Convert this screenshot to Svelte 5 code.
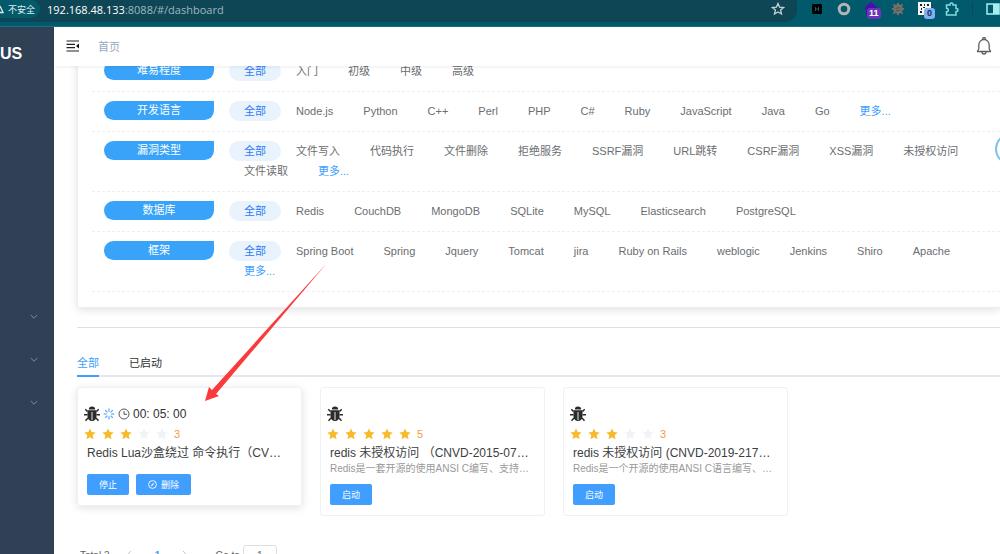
<script lang="ts">
	const filters = [
		{ label: '难易程度', items: ['入门', '初级', '中级', '高级'], more: false },
		{
			label: '开发语言',
			items: ['Node.js', 'Python', 'C++', 'Perl', 'PHP', 'C#', 'Ruby', 'JavaScript', 'Java', 'Go'],
			more: true
		},
		{
			label: '漏洞类型',
			items: [
				'文件写入',
				'代码执行',
				'文件删除',
				'拒绝服务',
				'SSRF漏洞',
				'URL跳转',
				'CSRF漏洞',
				'XSS漏洞',
				'未授权访问',
				'文件读取'
			],
			more: true
		},
		{
			label: '数据库',
			items: ['Redis', 'CouchDB', 'MongoDB', 'SQLite', 'MySQL', 'Elasticsearch', 'PostgreSQL'],
			more: false
		},
		{
			label: '框架',
			items: [
				'Spring Boot',
				'Spring',
				'Jquery',
				'Tomcat',
				'jira',
				'Ruby on Rails',
				'weblogic',
				'Jenkins',
				'Shiro',
				'Apache'
			],
			more: true
		}
	];

	const images = [
		{
			title: 'Redis Lua沙盒绕过 命令执行（CV…',
			desc: '',
			rank: 3,
			running: true,
			time: '00: 05: 00'
		},
		{
			title: 'redis 未授权访问 （CNVD-2015-07…',
			desc: 'Redis是一套开源的使用ANSI C编写、支持…',
			rank: 5,
			running: false,
			time: ''
		},
		{
			title: 'redis 未授权访问 (CNVD-2019-217…',
			desc: 'Redis是一个开源的使用ANSI C语言编写、…',
			rank: 3,
			running: false,
			time: ''
		}
	];

	const tabs = ['全部', '已启动'];
	const stars = [1, 2, 3, 4, 5];
	const rays = [0, 45, 90, 135, 180, 225, 270, 315];

	let activeTab = $state('全部');
	let page = $state('1');
</script>

<div class="window">
	<div class="browser">
		<div class="address">
			<span class="insecure">
				<svg width="8" height="10" viewBox="0 0 8 10"><path d="M-2 8.500H3L0 2" fill="none" stroke="#dceef0" stroke-width="1.300" /></svg>
				不安全
			</span>
			<span class="url"><b>192.168.48.133</b>:8088/#/dashboard</span>
			<svg class="bookmark" width="14" height="14" viewBox="0 0 14 14">
				<path d="M7 1.500l1.600 3.700 4 .3-3 2.600.9 3.900L7 9.900 3.500 12l.9-3.900-3-2.600 4-.3z" fill="none" stroke="#c5d3d6" stroke-width="1.300" />
			</svg>
		</div>
		<div class="extensions">
			<svg width="12" height="10" viewBox="0 0 12 10">
				<rect width="10" height="10" rx="1" fill="#000" />
				<path d="M3.500 3v4M6.500 3v4M3.500 5h3" stroke="#0d6475" />
			</svg>
			<svg width="14" height="14" viewBox="0 0 14 14"><circle cx="7" cy="7" r="4.800" fill="none" stroke="#b4b4b4" stroke-width="3" /></svg>
			<span class="ext">
				<svg width="14" height="14" viewBox="0 0 14 14"><path d="M0 6.500L7 0l7 6.500h-2V13H2V6.500z" fill="#4b0bad" /></svg>
				<span class="badge purple">11</span>
			</span>
			<svg width="14" height="14" viewBox="0 0 14 14">
				{#each rays as angle}
					<path d="M6 3L7 0.800L8 3z" fill="#74716b" stroke="#74716b" transform="rotate({angle} 7 7)" />
				{/each}
				<circle cx="7" cy="7" r="4.500" fill="#74716b" />
				<path d="M4.500 6.500l4-1M5 9l4-1" stroke="#4f5552" />
			</svg>
			<span class="ext">
				<svg width="14" height="14" viewBox="0 0 14 14">
					<rect width="13" height="13" fill="#f5f5f5" />
					<path d="M2 2h2v2H2zM9 2h2v2H9zM2 9h2v2H2zM5 5h2v1H5zM6 2h1v2H6zM3 6h1v2H3zM8 6h3v1H8z" fill="#222" />
				</svg>
				<span class="badge blue">0</span>
			</span>
			<svg width="14" height="14" viewBox="0 0 14 14">
				<path d="M1.500 3H5V2.500a1.500 1.500 0 0 1 3 0V3h3v3.500h.5a1.500 1.500 0 0 1 0 3H11V13H1.500V9.800a1.800 1.800 0 0 0 0-3.600z" fill="none" stroke="#83dbe0" stroke-width="1.500" />
			</svg>
			<i class="divider"></i>
			<svg width="14" height="12" viewBox="0 0 14 12">
				<rect x="1" y="1" width="12" height="10" fill="none" stroke="#a5f0ef" stroke-width="1.500" />
				<path d="M7 1h6v10H7z" fill="#a5f0ef" />
			</svg>
		</div>
	</div>

	<div class="app">
		<nav class="sidebar">
			<div class="logo">US</div>
			<div class="menu">
				{#each [1, 2, 3] as item}
					<button class="menu-item" aria-label="展开菜单 {item}">
						<svg width="8" height="6" viewBox="0 0 8 6"><path d="M0.800 1L4 4.200 7.200 1" fill="none" stroke="#7f8b9b" /></svg>
					</button>
				{/each}
			</div>
		</nav>

		<div class="main">
			<header class="navbar">
				<button aria-label="收起菜单">
					<svg width="14" height="12" viewBox="0 0 14 12">
						<path d="M0.500 1H13M0.500 4.300H9M0.500 7.600H9M0.500 11H13" stroke="#222" stroke-width="1.200" />
						<path d="M13 3.500v5L10 6z" fill="#111" />
					</svg>
				</button>
				<a class="crumb" href="#/dashboard">首页</a>
				<button class="bell" aria-label="通知">
					<svg width="16" height="18" viewBox="0 0 16 18">
						<path d="M1 14.500h14M2.800 12V8a5.200 5.500 0 0 1 10.400 0v4M6.800 2.500V1.600a1.200 1.200 0 0 1 2.400 0v.9M6 15a2 2 0 0 0 4 0M2.800 12L1.200 14.500M13.200 12l1.600 2.500" fill="none" stroke="#5c5e63" stroke-width="1.300" />
					</svg>
				</button>
			</header>

			<main class="content">
				<section class="filters">
					{#each filters as filter}
						<div class="filter">
							<span class="label">{filter.label}</span>
							<div class="options">
								<button class="option active">全部</button>
								{#each filter.items as item}
									<button class="option">{item}</button>
								{/each}
								{#if filter.more}
									<a class="option more" href="#/dashboard">更多...</a>
								{/if}
							</div>
						</div>
					{/each}
				</section>

				<hr />

				<div class="tabs">
					{#each tabs as tab}
						<button class="tab" class:active={tab === activeTab} onclick={() => (activeTab = tab)}>
							{tab}
						</button>
					{/each}
				</div>

				<div class="cards">
					{#each images as image}
						<article class="card" class:running={image.running}>
							<div class="status">
								<svg width="16" height="16" viewBox="0 0 16 16">
									<path d="M4.800 3.500a3.200 3 0 0 1 6.400 0z" fill="#2b2b2b" />
									<path d="M3.500 4.300h9v6.200a4.500 4.500 0 0 1-9 0z" fill="#2b2b2b" />
									<path d="M3.500 5.500L1.300 3.300M12.500 5.500l2.200-2.200M3.500 8.700H0M12.500 8.700H16M4 12l-2.500 2.700M12 12l2.500 2.700" stroke="#2b2b2b" stroke-width="1.500" />
									<path d="M8 6v8" stroke="#fff" stroke-width="0.900" />
								</svg>
								{#if image.running}
									<svg width="12" height="12" viewBox="0 0 12 12">
										{#each rays as angle}
											<path d="M6 0.600v3.200" stroke="#57a9f5" stroke-width="1.200" transform="rotate({angle} 6 6)" />
										{/each}
									</svg>
									<svg width="12" height="12" viewBox="0 0 12 12">
										<circle cx="6" cy="6" r="5" fill="none" stroke="#55585e" />
										<path d="M6 3v3.300h3" fill="none" stroke="#55585e" />
									</svg>
									<span class="time">{image.time}</span>
								{/if}
							</div>
							<div class="rate">
								{#each stars as star}
									<svg width="12" height="12" viewBox="0 0 12 12">
										<path d="M6 .5l1.700 3.600 3.900.5-2.900 2.700.8 3.900L6 9.300l-3.500 1.900.8-3.900L.4 4.600l3.900-.5z" fill={star <= image.rank ? '#f7ba2a' : '#eff2f7'} />
									</svg>
								{/each}
								<span class="score">{image.rank}</span>
							</div>
							<h3>{image.title}</h3>
							{#if image.desc}
								<p>{image.desc}</p>
							{/if}
							<div class="actions">
								{#if image.running}
									<button class="primary">停止</button>
									<button class="primary">
										<svg width="9" height="9" viewBox="0 0 9 9">
											<circle cx="4.500" cy="4.500" r="3.900" fill="none" stroke="#fff" stroke-width="0.900" />
											<path d="M6.300 2.700L5 5.200 2.800 6.400 4 3.900z" fill="#fff" />
										</svg>
										删除
									</button>
								{:else}
									<button class="primary">启动</button>
								{/if}
							</div>
						</article>
					{/each}
				</div>

				<div class="pagination">
					<span class="total">Total 3</span>
					<button class="pager" aria-label="上一页">
						<svg width="6" height="10" viewBox="0 0 6 10"><path d="M5 1L1 5l4 4" fill="none" stroke="#c0c4cc" /></svg>
					</button>
					<button class="pager current">1</button>
					<button class="pager" aria-label="下一页">
						<svg width="6" height="10" viewBox="0 0 6 10"><path d="M1 1l4 4-4 4" fill="none" stroke="#c0c4cc" /></svg>
					</button>
					<label>Go to <input type="text" bind:value={page} /></label>
				</div>
			</main>
		</div>
	</div>

	<svg class="arrow" width="124" height="140" viewBox="0 0 124 140">
		<path d="M122 0L11 131L14 133L0 138L4 124L7 127z" fill="#fb3b3b" />
	</svg>
	<span class="float-ball"></span>
</div>

<style>
	:global(body) {
		margin: 0;
		background: #fff;
	}

	.window {
		position: relative;
		display: flex;
		flex-direction: column;
		height: 100vh;
		overflow: hidden;
		font-family: 'Liberation Sans', 'Noto Sans CJK SC', sans-serif;
		font-size: 11px;
		color: #606266;
	}

	button,
	input {
		font: inherit;
		color: inherit;
		margin: 0;
		padding: 0;
		border: none;
		background: none;
	}

	button {
		cursor: pointer;
	}

	a {
		text-decoration: none;
	}

	svg {
		display: block;
		flex: none;
	}

	.browser {
		display: flex;
		flex: none;
		height: 26px;
		background: #005a6b;
		border-bottom: 1px solid #1c7180;
	}

	.address {
		display: flex;
		flex: 1;
		align-items: center;
		height: 22px;
		padding-bottom: 4px;
		box-sizing: border-box;
		background: #0f4656;
		border-radius: 0 0 12px 0;
	}

	.insecure {
		display: flex;
		align-items: center;
		height: 18px;
		padding-right: 5px;
		border-radius: 0 9px 9px 0;
		background: #045a6a;
		color: #dceef0;
		font-size: 9px;
		white-space: nowrap;
	}

	.url {
		flex: 1;
		margin-left: 7px;
		font-family: 'Open Sans', 'Noto Sans', sans-serif;
		font-size: 11px;
		color: #9db8be;
	}

	.url b {
		font-weight: 400;
		color: #fff;
	}

	.bookmark {
		margin-right: 12px;
	}

	.extensions {
		display: flex;
		align-items: center;
		gap: 13px;
		height: 18px;
		padding-left: 15px;
		width: 203px;
		box-sizing: border-box;
	}

	.ext {
		position: relative;
	}

	.badge {
		position: absolute;
		left: 3px;
		top: 6px;
		height: 11px;
		line-height: 11px;
		padding: 0 2px;
		border-radius: 3px;
		font-size: 9px;
		font-weight: 700;
	}

	.purple {
		background: #6a35b8;
		color: #fff;
	}

	.blue {
		left: 6px;
		padding: 0 3px;
		background: #7fb0f5;
		color: #1c2c4c;
	}

	.divider {
		width: 1px;
		height: 12px;
		background: #0f4656;
	}

	.app {
		display: flex;
		flex: 1;
		min-height: 0;
	}

	.sidebar {
		width: 54px;
		flex: none;
		background: #304156;
	}

	.logo {
		height: 53px;
		line-height: 53px;
		font-size: 16px;
		font-weight: 700;
		color: #fff;
	}

	.menu {
		padding-top: 215px;
	}

	.menu-item {
		display: flex;
		align-items: center;
		justify-content: flex-end;
		width: 100%;
		height: 43px;
		padding-right: 16px;
	}

	.main {
		display: flex;
		flex: 1;
		flex-direction: column;
		min-width: 0;
	}

	.navbar {
		position: relative;
		z-index: 1;
		display: flex;
		flex: none;
		align-items: center;
		height: 39px;
		padding: 0 8px 2px 12px;
		box-sizing: border-box;
		background: #fff;
		box-shadow: 0 1px 3px rgba(0, 21, 41, 0.08);
	}

	.crumb {
		margin-left: 18px;
		color: #97a8be;
	}

	.bell {
		margin-left: auto;
	}

	.content {
		flex: 1;
		min-height: 0;
		padding-left: 23px;
	}

	.filters {
		margin-top: -15px;
		padding: 0 0 15px 14px;
		border: 1px solid #ebeef5;
		border-right: none;
		border-radius: 3px 0 0 3px;
		box-shadow: 0 2px 9px rgba(0, 0, 0, 0.12);
	}

	.filter {
		display: flex;
		padding: 9px 0 10px 12px;
		border-bottom: 1px dashed #ebeef5;
	}

	.label {
		flex: none;
		width: 110px;
		height: 19px;
		margin-right: 15px;
		border-radius: 10px 0 10px 10px;
		background: #38a3f8;
		color: #fff;
		line-height: 19px;
		text-align: center;
	}

	.options {
		display: flex;
		flex: 1;
		flex-wrap: wrap;
	}

	.option {
		height: 20px;
		padding: 0 15px;
		color: #6b6d70;
		line-height: 20px;
		white-space: nowrap;
	}

	.option.active {
		border-radius: 10px;
		background: #e8f3fe;
		color: #2f7bf6;
	}

	.option.more {
		color: #409eff;
	}

	hr {
		height: 1px;
		margin: 19px 0 0;
		border: none;
		background: #dcdfe6;
	}

	.tabs {
		display: flex;
		gap: 30px;
		margin-top: 18px;
		box-shadow: inset 0 -2px #e4e7ed;
	}

	.tab {
		height: 31px;
		padding-top: 3px;
		border-bottom: 2px solid transparent;
		box-sizing: border-box;
		color: #303133;
	}

	.tab.active {
		border-color: #409eff;
		color: #409eff;
	}

	.cards {
		display: flex;
		align-items: flex-start;
		gap: 18px;
		height: 157px;
		margin-top: 10px;
	}

	.card {
		width: 225px;
		padding: 16px 6px 10px;
		box-sizing: border-box;
		border: 1px solid #f0f1f5;
		border-radius: 3px;
	}

	.card.running {
		box-shadow: 0 2px 9px rgba(0, 0, 0, 0.12);
	}

	.status {
		display: flex;
		align-items: center;
		gap: 3px;
		height: 20px;
		font-size: 12px;
		color: #303133;
	}

	.rate {
		display: flex;
		align-items: center;
		gap: 6px;
		height: 20px;
	}

	.score {
		color: #f79a3e;
	}

	h3,
	p {
		margin: 0 0 0 3px;
		overflow: hidden;
		font-weight: 400;
		text-overflow: ellipsis;
		white-space: nowrap;
	}

	h3 {
		height: 18px;
		line-height: 18px;
		font-size: 12px;
		color: #3c3e42;
	}

	p {
		height: 14px;
		line-height: 14px;
		font-size: 10px;
		color: #999;
	}

	.actions {
		display: flex;
		gap: 7px;
		margin: 8px 0 0 3px;
	}

	.running .actions {
		margin-top: 12px;
	}

	.primary {
		display: flex;
		align-items: center;
		gap: 4px;
		height: 21px;
		padding: 0 12px;
		border-radius: 2px;
		background: #409eff;
		color: #fff;
		font-size: 9px;
	}

	.pagination {
		display: flex;
		align-items: center;
		height: 22px;
		padding-left: 3px;
		font-size: 10px;
	}

	.pager {
		display: flex;
		align-items: center;
		justify-content: center;
		width: 28px;
	}

	.current {
		color: #409eff;
		font-weight: 700;
	}

	.total {
		margin-right: 6px;
	}

	label {
		margin-left: 16px;
	}

	input {
		width: 34px;
		height: 20px;
		border: 1px solid #dcdfe6;
		border-radius: 3px;
		box-sizing: border-box;
		text-align: center;
	}

	.arrow {
		position: absolute;
		left: 205px;
		top: 263px;
		pointer-events: none;
	}

	.float-ball {
		position: absolute;
		right: -27px;
		top: 133px;
		width: 28px;
		height: 28px;
		border: 2px solid #7cc4e4;
		border-radius: 50%;
	}
</style>
